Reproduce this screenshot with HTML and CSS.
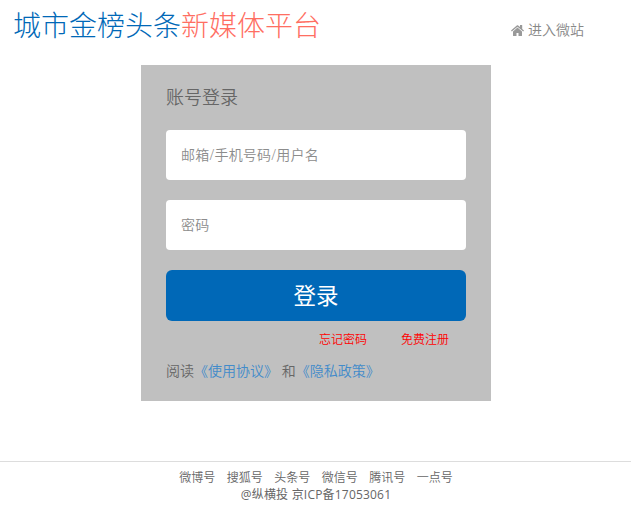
FILE: index.html
```html
<!DOCTYPE html>
<html lang="zh-CN">
<head>
<meta charset="utf-8">
<title>账号登录</title>
<link rel="stylesheet" href="styles.css">
</head>
<body>
<header class="header">
  <h1 class="brand">城市金榜头条<span class="brand-accent">新媒体平台</span></h1>
  <a class="home-link"><svg class="home-icon" viewBox="0 0 13 11"><path d="M6.5 2.6 2 6.4V10.4c0 .4.2.6.6.6h2.9V7.9h2V11h2.9c.4 0 .6-.2.6-.6V6.4z"/><path d="M13 5.5 11.2 4V.3c0-.2-.1-.3-.3-.3H9.3c-.2 0-.3.1-.3.3v1.8L7.2.5c-.4-.3-1-.3-1.4 0L0 5.5l.8.9 5.7-4.7 5.7 4.7z"/></svg>进入微站</a>
</header>
<main class="login">
  <h2 class="login-title">账号登录</h2>
  <input class="field" type="text" placeholder="邮箱/手机号码/用户名">
  <input class="field" type="password" placeholder="密码">
  <button class="submit">登录</button>
  <div class="links"><a>忘记密码</a><a>免费注册</a></div>
  <p class="terms">阅读<a>《使用协议》</a> 和<a>《隐私政策》</a></p>
</main>
<footer class="footer">
  <nav class="footer-nav"><a>微博号</a><a>搜狐号</a><a>头条号</a><a>微信号</a><a>腾讯号</a><a>一点号</a></nav>
  <div class="copyright">@纵横投 京ICP备17053061</div>
</footer>
</body>
</html>
```
FILE: styles.css
```css
* { box-sizing: border-box; }
body {
  margin: 0;
  background: #fff;
  color: #666;
  font: 350 14px/20px "Open Sans", "Noto Sans CJK SC", sans-serif;
}
.header {
  display: flex;
  justify-content: space-between;
  height: 65px;
  padding: 5px 47px 0 13px;
}
.brand {
  margin: 0;
  font-size: 28px;
  line-height: 40px;
  font-weight: 300;
  color: #0068b7;
  white-space: nowrap;
}
.brand-accent { color: #ff6e62; }
.home-link {
  display: flex;
  align-items: center;
  gap: 4px;
  height: 20px;
  margin-top: 15px;
  color: #888;
}
.home-icon { width: 13px; height: 11px; fill: #999; }
.login {
  width: 350px;
  height: 336px;
  margin: 0 auto 0 141px;
  padding: 20px 25px 0;
  background: #c0c0c0;
}
.login-title {
  margin: 0 0 20px;
  font-size: 18px;
  line-height: 25px;
  font-weight: 350;
}
.field {
  display: block;
  width: 300px;
  height: 50px;
  margin-bottom: 20px;
  padding: 0 15px 2px;
  border: 0;
  border-radius: 4px;
  background: #fff;
  font: inherit;
  letter-spacing: 0.22px;
}
.field::placeholder { color: #8c8c8c; opacity: 1; }
.submit {
  display: block;
  width: 300px;
  height: 51px;
  padding: 1px 0 0;
  border: 0;
  border-radius: 6px;
  background: #0068b7;
  color: #fff;
  font: 400 22.5px/50px "Open Sans", "Noto Sans CJK SC", sans-serif;
}
.links {
  display: flex;
  justify-content: flex-end;
  gap: 34px;
  padding: 9px 17px 0 0;
  font-size: 12px;
  color: #f00;
}
.terms { margin: 11px 0 0; white-space: nowrap; }
.terms a { color: #428bca; }
.footer {
  margin-top: 60px;
  padding: 7px 0 0 1px;
  border-top: 1px solid #ddd;
  font-size: 12px;
  line-height: 17px;
  text-align: center;
}
.footer-nav { display: flex; justify-content: center; gap: 11.5px; }
.copyright { font-weight: 400; letter-spacing: 0.2px; }
```
